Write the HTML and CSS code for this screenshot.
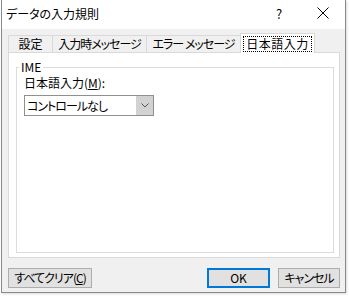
FILE: index.html
```html
<!DOCTYPE html>
<html lang="ja">
<head>
<meta charset="utf-8">
<title>データの入力規則</title>
<link rel="stylesheet" href="styles.css">
</head>
<body>
<div class="dialog">
  <div class="titlebar">
    <span class="title">データの入力規則</span>
    <span class="help">?</span>
    <span class="close"><svg width="12" height="12" viewBox="0 0 12 12"><path d="M0.5 0.5 L11.5 11.5 M11.5 0.5 L0.5 11.5" stroke="#000" stroke-width="1" fill="none"/></svg></span>
  </div>
  <div class="body">
    <div class="tabs">
      <div class="tab t1">設定</div>
      <div class="tab t2 narrow">入力時メッセージ</div>
      <div class="tab t3 narrow">エラー メッセージ</div>
      <div class="tab t4 selected"><span class="focus">日本語入力</span></div>
    </div>
    <div class="panel">
      <fieldset class="group">
        <legend>IME</legend>
        <div class="label">日本語入力(<u>M</u>):</div>
        <div class="combo">
          <span class="combo-text narrow">コントロールなし</span>
          <span class="combo-btn"><svg width="8" height="5" viewBox="0 0 8 5"><path d="M0.5 0.5 L4 4 L7.5 0.5" stroke="#555" stroke-width="1" fill="none"/></svg></span>
        </div>
      </fieldset>
    </div>
    <div class="buttons">
      <button class="btn clear narrow">すべてクリア(<u>C</u>)</button>
      <div class="spacer"></div>
      <button class="btn ok">OK</button>
      <button class="btn cancel narrow">キャンセル</button>
    </div>
  </div>
</div>
</body>
</html>
```
FILE: styles.css
```css
html, body {
  margin: 0;
  padding: 0;
  background: #ffffff;
}
body {
  width: 349px;
  height: 296px;
  overflow: hidden;
  font-family: "Noto Sans CJK JP", "Noto Sans", sans-serif;
  font-size: 12px;
  color: #000;
  font-feature-settings: "palt";
}
.narrow {
  letter-spacing: -1px;
}
.dialog {
  margin-left: 1px;
  width: 343px;
  height: 292px;
  border: 1px solid #8a8a8a;
  border-top: none;
  display: flex;
  flex-direction: column;
  background: #f0f0f0;
  box-shadow: 1px 1px 2px rgba(0,0,0,0.15);
}
.titlebar {
  height: 29px;
  background: #ffffff;
  display: flex;
  align-items: center;
  padding-left: 4px;
  box-sizing: border-box;
}
.title {
  font-size: 12px;
  line-height: 14px;
  flex: 1;
  margin-top: -2px;
}
.help {
  font-size: 13px;
  line-height: 14px;
  width: 10px;
  margin-right: 31px;
  margin-top: -2px;
}
.close {
  width: 12px;
  height: 12px;
  margin-right: 16px;
  margin-top: -3px;
  display: flex;
}
.body {
  flex: 1;
  display: flex;
  flex-direction: column;
  padding: 4px 0 4px 6px;
}
.tabs {
  display: flex;
  align-items: flex-end;
  height: 19px;
}
.tab {
  box-sizing: border-box;
  height: 17px;
  border: 1px solid #d9d9d9;
  border-bottom: none;
  background: #f0f0f0;
  display: flex;
  align-items: center;
  justify-content: center;
  line-height: 14px;
  margin-left: -1px;
}
.t1 { width: 45px; margin-left: 0; }
.t2 { width: 95px; }
.t3 { width: 95px; }
.t4 { width: 75px; }
.tab.selected {
  height: 20px;
  margin-bottom: -1px;
  background: #ffffff;
  border-color: #d9d9d9;
  position: relative;
  z-index: 1;
}
.focus {
  outline: 1px dotted #000;
  outline-offset: 0;
  padding: 0 2px;
  line-height: 14px;
  letter-spacing: 0.5px;
}
.panel {
  box-sizing: border-box;
  width: 332px;
  height: 206px;
  background: #ffffff;
  border: 1px solid #d9d9d9;
  padding: 7px 5px 4px 7px;
}
.group {
  box-sizing: border-box;
  margin: 0;
  height: 193px;
  border: 1px solid #dcdcdc;
  padding: 0 0 0 7px;
  min-width: 0;
}
.group legend {
  margin-left: -5px;
  padding: 0 2px;
  line-height: 14px;
}
.label {
  margin-top: 2px;
  line-height: 14px;
}
.label u, .btn u {
  text-underline-offset: 1px;
}
.combo {
  margin-top: 5px;
  box-sizing: border-box;
  width: 130px;
  height: 21px;
  border: 1px solid #8f8f8f;
  background: #ffffff;
  display: flex;
  align-items: stretch;
}
.combo-text {
  flex: 1;
  display: flex;
  align-items: center;
  padding-left: 2px;
  line-height: 14px;
}
.combo-btn {
  width: 17px;
  background: #d2d2d2;
  display: flex;
  align-items: center;
  justify-content: center;
}
.buttons {
  margin-top: 10px;
  display: flex;
  align-items: center;
  width: 332px;
}
.spacer { flex: 1; }
.btn {
  box-sizing: border-box;
  height: 20px;
  padding: 0;
  margin: 0;
  font-family: inherit;
  font-size: 12px;
  line-height: 14px;
  color: #000;
  background: #e1e1e1;
  border: 1px solid #adadad;
  font-feature-settings: "palt";
}
.clear { width: 84px; }
.ok {
  width: 63px;
  border: 2px solid #0078d7;
}
.cancel {
  width: 62px;
  margin-left: 8px;
}
```
